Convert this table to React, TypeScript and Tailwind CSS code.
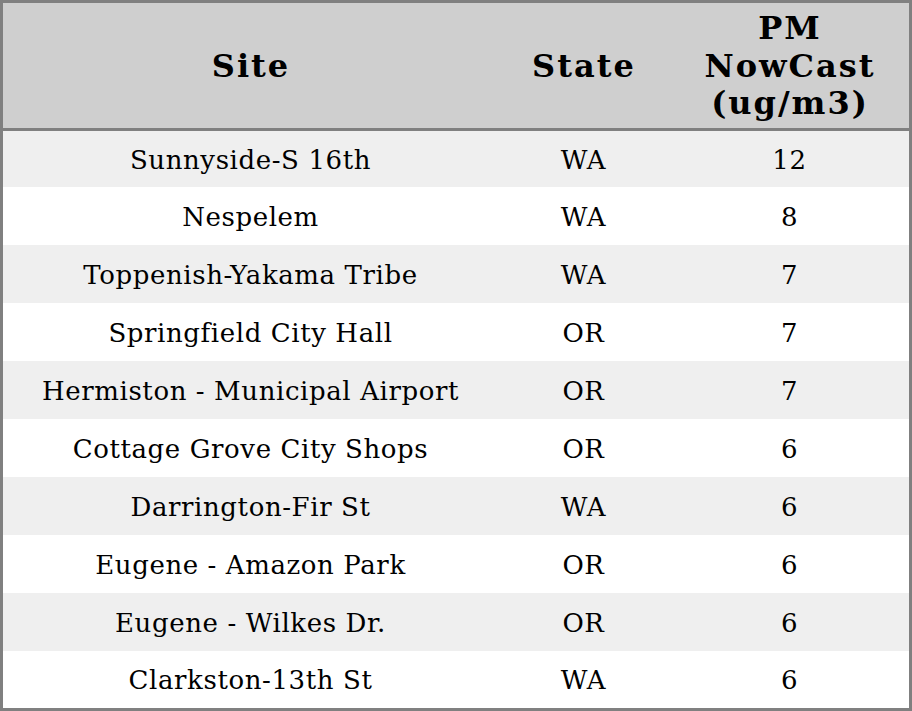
import React from 'react';

const rows: [string, string, number][] = [
  ['Sunnyside-S 16th', 'WA', 12],
  ['Nespelem', 'WA', 8],
  ['Toppenish-Yakama Tribe', 'WA', 7],
  ['Springfield City Hall', 'OR', 7],
  ['Hermiston - Municipal Airport', 'OR', 7],
  ['Cottage Grove City Shops', 'OR', 6],
  ['Darrington-Fir St', 'WA', 6],
  ['Eugene - Amazon Park', 'OR', 6],
  ['Eugene - Wilkes Dr.', 'OR', 6],
  ['Clarkston-13th St', 'WA', 6],
];

const rowHeight = (i: number) => (i === 0 ? 'h-[56px]' : i === rows.length - 1 ? 'h-[57px]' : 'h-[58px]');

const App: React.FC = () => {
  return (
    <div className="w-[912px] h-[711px] bg-white border-[3px] border-[#808080] font-['DejaVu_Serif',serif] text-black">
      <div className="grid grid-cols-[494px_172px_1fr] h-[128px] bg-[#cfcfcf] border-b-[3px] border-[#808080] text-[32px] font-bold leading-[1.17] tracking-[2px] text-center">
        <div className="flex items-center justify-center pt-[2px] pl-[2px]">Site</div>
        <div className="flex items-center justify-center pt-[2px] pl-[2px]">State</div>
        <div className="flex items-center justify-center pt-[2px] pl-[2px]">
          <span>
            PM
            <br />
            NowCast
            <br />
            (ug/m3)
          </span>
        </div>
      </div>
      {rows.map(([site, state, pm], i) => (
        <div
          key={site}
          className={`grid grid-cols-[494px_172px_1fr] items-center text-center text-[26px] tracking-[0.6px] ${rowHeight(i)} ${i % 2 === 0 ? 'bg-[#efefef]' : 'bg-white'}`}
        >
          <div className="pt-[2px] pl-[1px]">{site}</div>
          <div className="pt-[2px] pl-[1px]">{state}</div>
          <div className="pt-[2px] pl-[1px]">{pm}</div>
        </div>
      ))}
    </div>
  );
};

export default App;
